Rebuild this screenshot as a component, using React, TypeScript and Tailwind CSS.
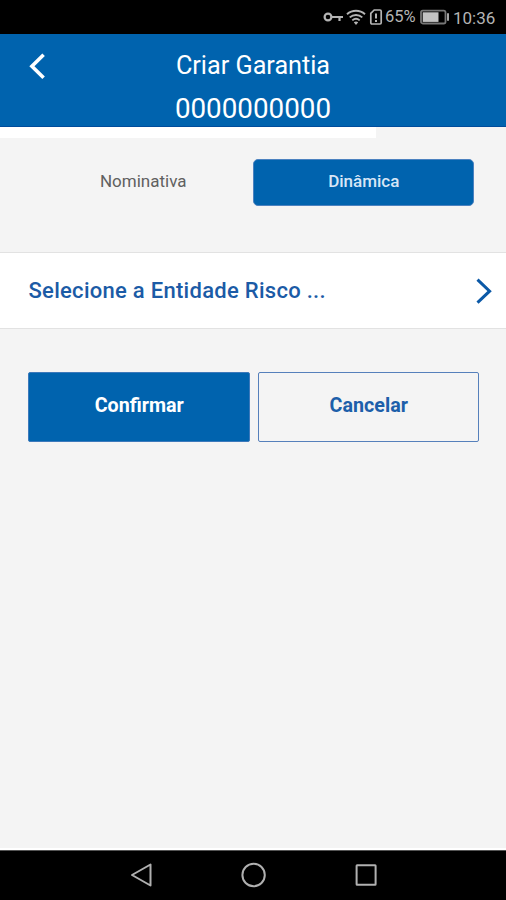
import type { ReactNode } from 'react'

interface ActionButtonProps {
  children: ReactNode
  variant: 'primary' | 'outline'
}

function StatusBar() {
  return (
    <div className="flex h-[34px] items-center bg-black pl-[323px] text-[#b4b4b4]">
      <svg width="21" height="34" viewBox="0 0 21 34" fill="none" stroke="currentColor" strokeWidth="2.2">
        <circle cx="5" cy="17" r="3.4" />
        <path d="M8 17H20M16.5 17V21" />
      </svg>
      <svg className="ml-[2px]" width="20" height="34" viewBox="0 0 20 34" fill="none" stroke="currentColor" strokeWidth="1.9">
        <path d="M1 14.2C6.2 9.5 13.8 9.5 19 14.2" />
        <path d="M3.7 17.4C7.4 14.1 12.6 14.1 16.3 17.4" />
        <path d="M6.3 20.4C8.5 18.5 11.5 18.5 13.7 20.4" />
        <path d="M7.8 22.3C9.2 21.3 10.8 21.3 12.2 22.3L10 25Z" fill="currentColor" stroke="none" />
      </svg>
      <svg className="ml-[3px]" width="14" height="34" viewBox="0 0 14 34" fill="none" stroke="currentColor" strokeWidth="1.7">
        <path d="M5.2 10H11Q12.2 10 12.2 11.2V22.8Q12.2 24 11 24H3Q1.8 24 1.8 22.8V13.4Z" />
        <path d="M7 13.5V18.6M7 20V22" strokeWidth="2" />
      </svg>
      <span className="ml-[2px] w-[35px] whitespace-nowrap text-[16.5px] leading-[34px]">65%</span>
      <svg width="30" height="34" viewBox="0 0 30 34">
        <rect x="1" y="10.7" width="24.5" height="12.8" rx="1.8" fill="none" stroke="#777777" strokeWidth="1.8" />
        <rect x="2.7" y="12.3" width="15.8" height="9.6" fill="#c2c2c2" />
        <rect x="27" y="13" width="2" height="8" rx="1" fill="#a5a5a5" />
      </svg>
      <span className="ml-[3px] whitespace-nowrap pt-px text-[17px] leading-[34px]">10:36</span>
    </div>
  )
}

function Header() {
  return (
    <header className="flex h-[93px] border-b border-[#004c9c] bg-[#0063ae] text-white">
      <button type="button" aria-label="Voltar" className="flex h-[64px] w-[75px] items-center justify-center">
        <svg width="20" height="28" viewBox="0 0 20 28" fill="none" stroke="currentColor" strokeWidth="3.6">
          <path d="M15.6 2.7L3.9 14.2L15.6 25.7" />
        </svg>
      </button>
      <div className="flex w-[356px] flex-col items-center">
        <h1 className="mt-[10px] h-[43px] text-[25.2px] leading-[44px]">Criar Garantia</h1>
        <span className="text-[27.8px] leading-[44px]">0000000000</span>
      </div>
    </header>
  )
}

function TypeTabs() {
  return (
    <div className="mt-[21px] flex h-[47px] px-8">
      <button type="button" className="w-[221px] pb-px pl-[2px] text-[17px] text-[#606060]">
        Nominativa
      </button>
      <button type="button" className="w-[222px] rounded-[5px] border border-[#4c82c0] bg-[#0063ae] pb-px pl-px text-[17px] font-medium text-[#d8e6f6]">
        Dinâmica
      </button>
    </div>
  )
}

function ActionButton({ children, variant }: ActionButtonProps) {
  const colors = variant === 'primary' ? 'border-[#3c79bb] bg-[#0063ae] text-white' : 'border-[#5680bb] text-[#1d5faa]'

  return (
    <button type="button" className={`h-[70px] flex-1 rounded-[2px] border pb-[3px] pl-px text-[19.7px] font-bold ${colors}`}>
      {children}
    </button>
  )
}

function NavigationBar() {
  return (
    <nav className="flex h-[50px] items-center border-t border-[#555555] bg-black pb-px pl-[130px] text-[#b0b0b0]">
      <svg width="24" height="26" viewBox="0 0 24 26" fill="none" stroke="currentColor" strokeWidth="2" strokeLinejoin="round">
        <path d="M20.5 2.5V23.5L2 13Z" />
      </svg>
      <svg className="ml-[87px]" width="26" height="26" viewBox="0 0 26 26" fill="none" stroke="currentColor" strokeWidth="2">
        <circle cx="12.6" cy="13" r="11.2" />
      </svg>
      <svg className="ml-[87px]" width="24" height="26" viewBox="0 0 24 26" fill="none" stroke="currentColor" strokeWidth="2">
        <rect x="2.6" y="3.3" width="19" height="19.4" rx="0.5" />
      </svg>
    </nav>
  )
}

function App() {
  return (
    <div className="flex h-[900px] w-[506px] flex-col overflow-hidden bg-[#f4f4f4] font-['Roboto',sans-serif]">
      <StatusBar />
      <Header />
      <main className="flex flex-1 flex-col border-b-2 border-white">
        <div className="h-[11px] w-[376px] bg-white" />
        <TypeTabs />
        <button
          type="button"
          className="mt-[46px] flex h-[77px] items-center justify-between border-y border-[#e2e2e2] bg-white pr-[12px] pl-[28px] text-[#1b5ba6]"
        >
          <span className="pl-[0.5px] text-[22px] font-medium tracking-[0.28px]">Selecione a Entidade Risco ...</span>
          <svg width="20" height="28" viewBox="0 0 20 28" fill="none" stroke="#0b59a7" strokeWidth="3">
            <path d="M3.5 2.7L15.6 14.2L3.5 25.7" />
          </svg>
        </button>
        <div className="mt-[43px] flex gap-[8px] pr-[27px] pl-[28px]">
          <ActionButton variant="primary">Confirmar</ActionButton>
          <ActionButton variant="outline">Cancelar</ActionButton>
        </div>
      </main>
      <NavigationBar />
    </div>
  )
}

export default App
